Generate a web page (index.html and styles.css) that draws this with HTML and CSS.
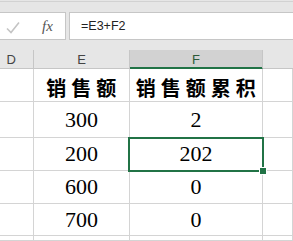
FILE: index.html
```html
<!DOCTYPE html>
<html lang="zh-CN">
<head>
  <meta charset="UTF-8" />
  <title>销售额累积</title>
  <link rel="stylesheet" href="styles.css">
</head>
<body>
  <div class="formula-strip">
    <div class="strip-edge"></div>
    <div class="formula-row">
      <div class="name-tools">
        <svg class="icon-check" width="14" height="13" viewBox="0 0 14 13">
          <path d="M1 7.5 L5 11.5 L13 1.5" fill="none" stroke="#c4c4c4" stroke-width="1.6"/>
        </svg>
        <span class="fx">fx</span>
      </div>
      <div class="formula-input">=E3+F2</div>
    </div>
  </div>

  <div class="sheet">
    <div class="col-head col-d">D</div>
    <div class="col-head">E</div>
    <div class="col-head active">F</div>
    <div class="col-head blank"></div>

    <div class="cell"></div>
    <div class="cell title">销售额</div>
    <div class="cell title">销售额累积</div>
    <div class="cell"></div>

    <div class="cell"></div>
    <div class="cell num">300</div>
    <div class="cell num">2</div>
    <div class="cell"></div>

    <div class="cell"></div>
    <div class="cell num">200</div>
    <div class="cell num">202</div>
    <div class="cell"></div>

    <div class="cell"></div>
    <div class="cell num">600</div>
    <div class="cell num">0</div>
    <div class="cell"></div>

    <div class="cell"></div>
    <div class="cell num">700</div>
    <div class="cell num">0</div>
    <div class="cell"></div>

    <div class="cell"></div>
    <div class="cell"></div>
    <div class="cell"></div>
    <div class="cell"></div>

    <div class="selection"><span class="fill-handle"></span></div>
  </div>
</body>
</html>
```

FILE: styles.css
```css
body {
  margin: 0;
  width: 293px;
  height: 241px;
  overflow: hidden;
  background: #fff;
  font-family: 'Liberation Sans', Arial, sans-serif;
}

/* formula bar */
.formula-strip {
  height: 50px;
  box-sizing: border-box;
  padding-top: 1px;
  background: #e6e6e6;
}

.strip-edge {
  height: 1px;
  background: #d2d2d2;
}

.formula-row {
  display: flex;
  gap: 3px;
  height: 28px;
  margin-top: 10px;
}

.name-tools {
  display: flex;
  align-items: center;
  width: 67px;
  margin-left: -1px;
  padding-left: 6px;
  box-sizing: border-box;
  background: #fff;
  border: 1px solid #c6c6c6;
}

.icon-check {
  margin-top: 2px;
}

.fx {
  margin-left: 22px;
  font-family: Tinos, "Times New Roman", "Liberation Serif", "Noto Serif", "DejaVu Serif", serif;
  font-style: italic;
  font-size: 15px;
  color: #555;
}

.formula-input {
  flex: 1;
  margin-right: -1px;
  padding-left: 11px;
  background: #fff;
  border: 1px solid #c6c6c6;
  font-size: 12.5px;
  line-height: 26px;
  color: #222;
}

/* grid */
.sheet {
  position: relative;
  display: grid;
  grid-template-columns: 34px 96px 133px 1fr;
  grid-template-rows: 19px 33px 36px 33px 33px 32px 1fr;
  height: 191px;
}

.col-head {
  display: flex;
  align-items: center;
  justify-content: center;
  box-sizing: border-box;
  background: #e6e6e6;
  border-right: 1px solid #c6c6c6;
  border-bottom: 1px solid #c6c6c6;
  font-size: 13px;
  color: #444;
}

.col-head.col-d {
  justify-content: flex-end;
  padding-right: 17px;
}

.col-head.active {
  background: #d2d2d2;
  border-bottom-color: #217346;
  box-shadow: inset 0 -1px 0 #217346;
  color: #2d5a38;
}

.col-head.blank {
  border-right: none;
}

.cell {
  display: flex;
  align-items: center;
  justify-content: center;
  box-sizing: border-box;
  border-right: 1px solid #d4d4d4;
  border-bottom: 1px solid #d4d4d4;
  color: #000;
}

.cell.title {
  padding: 5px 0 0 4.5px;
  font-family: "Noto Sans CJK SC", sans-serif;
  font-weight: bold;
  font-size: 20px;
  letter-spacing: 5px;
}

.cell.num {
  font-family: Tinos, "Times New Roman", "Liberation Serif", "Noto Serif", "DejaVu Serif", serif;
  font-size: 22px;
}

.selection {
  position: absolute;
  left: 128px;
  top: 87px;
  width: 136px;
  height: 35px;
  box-sizing: border-box;
  border: 2px solid #217346;
}

.fill-handle {
  position: absolute;
  left: 130px;
  top: 29px;
  width: 6px;
  height: 6px;
  background: #217346;
  box-shadow: 0 0 0 1px #fff;
}
```
